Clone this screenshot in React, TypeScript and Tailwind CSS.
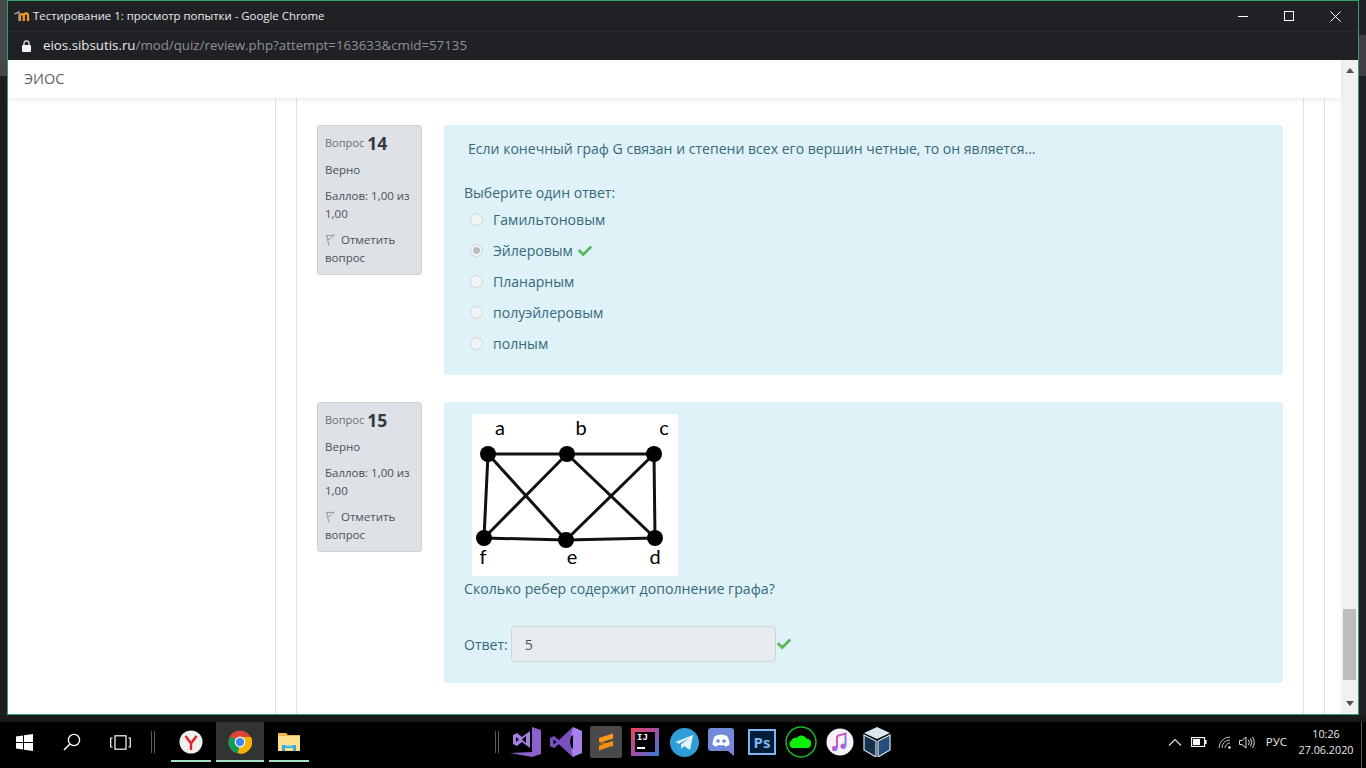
import React from "react";
import { FaCheck } from "react-icons/fa";

const Check = ({ s = 14 }: { s?: number }) => <FaCheck size={s} className="text-[#5cb85c] shrink-0" />;

const Radio = ({ on }: { on?: boolean }) => (
  <span className="w-[13px] h-[13px] rounded-full border border-[#cfd3d6] bg-[#f2f4f5] flex items-center justify-center shrink-0">
    {on && <span className="w-[7px] h-[7px] rounded-full bg-[#b9bdc0]" />}
  </span>
);

const Flag = () => (
  <svg width="10" height="12" viewBox="0 0 10 12" className="shrink-0" fill="none" stroke="#8a8d90" strokeWidth="0.9">
    <path d="M1.5 1 L4 11.5" />
    <path d="M1.5 1.2 C4 2 6 1.4 9.2 1 C7.6 2.8 6.4 3.6 6 4.2 C5 5 4 5.4 2.6 5.6" />
  </svg>
);

const Info = ({ n }: { n: string }) => (
  <div className="w-[105px] h-[150px] shrink-0 rounded-[3px] border border-[#cdd1d5] bg-[#dee2e6] pl-[7px] pr-1 pt-[6px] text-[11.5px] leading-[18px] text-[#495057]">
    <div className="h-[22px] flex items-center gap-[3px]">
      <span className="text-[11px] text-[#6a7076]">Вопрос</span>
      <b className="text-[17.5px] text-[#343a40] font-bold">{n}</b>
    </div>
    <div className="mt-[7px]">Верно</div>
    <div className="mt-2">Баллов: 1,00 из<br />1,00</div>
    <div className="mt-2 flex items-center gap-[6px]"><Flag /><span>Отметить</span></div>
    <div>вопрос</div>
  </div>
);

const Option = ({ t, on, check }: { t: string; on?: boolean; check?: boolean }) => (
  <div className="h-[31px] flex items-center pl-[6px] gap-[10px]">
    <Radio on={on} />
    <span className="flex items-center gap-[5px]">{t}{check && <Check />}</span>
  </div>
);

const Graph = () => {
  const n: Record<string, [number, number]> = { a: [16, 40], b: [95, 40], c: [182, 40], f: [12, 124], e: [94, 126], d: [183, 124] };
  const edges = ["ab", "bc", "cd", "de", "ef", "fa", "ae", "bf", "bd", "ce"];
  return (
    <svg width="206" height="162" viewBox="0 0 206 162" className="bg-white block">
      {edges.map((e) => (
        <line key={e} x1={n[e[0]][0]} y1={n[e[0]][1]} x2={n[e[1]][0]} y2={n[e[1]][1]} stroke="#111" strokeWidth="3" />
      ))}
      {Object.values(n).map(([x, y], i) => <circle key={i} cx={x} cy={y} r="8" fill="#000" />)}
      <g fontFamily="Lato, sans-serif" fontSize="20" fill="#000" textAnchor="middle">
        <text x="28" y="21">a</text>
        <text x="109" y="21">b</text>
        <text x="192" y="21">c</text>
        <text x="11" y="150">f</text>
        <text x="100" y="150">e</text>
        <text x="183" y="150">d</text>
      </g>
    </svg>
  );
};

const Win = () => (
  <svg width="17" height="17" viewBox="0 0 17 17" fill="#fff"><path d="M0 2.4 7 1.4V8H0ZM8 1.2 17 0V8H8ZM0 9H7V15.6L0 14.6ZM8 9H17V17L8 15.8Z" /></svg>
);
const Search = () => (
  <svg width="18" height="18" viewBox="0 0 18 18" fill="none" stroke="#fff" strokeWidth="1.3"><circle cx="11" cy="7" r="5.6" /><path d="M7 11 1 17" strokeWidth="1.6" /></svg>
);
const TaskView = () => (
  <svg width="21" height="15" viewBox="0 0 21 15" fill="none" stroke="#fff" strokeWidth="1.2"><rect x="5" y="0.8" width="11" height="13.4" /><path d="M2.6 3H.7V12H2.6M18.4 3H20.3V12H18.4" /></svg>
);
const Yandex = () => (
  <svg width="24" height="24" viewBox="0 0 24 24"><circle cx="12" cy="12" r="11.5" fill="#f1efee" /><path d="M6.5 6 12 13.5 17.5 6M12 13.5V20" stroke="#e3202a" strokeWidth="2.4" fill="none" /></svg>
);
const Chrome = () => (
  <svg width="24" height="24" viewBox="0 0 24 24">
    <circle cx="12" cy="12" r="11.5" fill="#db4437" />
    <path d="M12 12 1.9 6.5A11.5 11.5 0 0 0 10 23.3Z" fill="#0f9d58" />
    <path d="M12 7H23A11.5 11.5 0 0 1 10 23.3L12 12Z" fill="#f4b400" />
    <circle cx="12" cy="12" r="5.4" fill="#fff" /><circle cx="12" cy="12" r="4.2" fill="#4285f4" />
  </svg>
);
const Folder = () => (
  <svg width="22" height="20" viewBox="0 0 22 20"><path d="M0 1H8L10 3H22V4.5H0Z" fill="#e9b94a" /><rect y="4" width="22" height="15" fill="#fbe08e" /><path d="M4 19V13H18V19H15V16H7V19Z" fill="#3fa7d6" /><rect x="7" y="13" width="8" height="1.6" fill="#7fd0ee" /></svg>
);
const VS1 = () => (
  <svg width="33" height="32" viewBox="0 0 33 32"><path d="M22 1 31 4V28L22 31 0 27 22 26Z" fill="#8b62cc" /><path d="M3 9 7 7 12 11 20 5V22L12 16 7 20 3 18Z" fill="#a67fe0" /><path d="M6 11V16L9 13.5ZM16 10 12 13.5 16 17Z" fill="#000" /></svg>
);
const VS2 = () => (
  <svg width="33" height="32" viewBox="0 0 33 32"><path d="M23 1 32 5V27L23 31 9 18Z" fill="#a77fe8" /><path d="M23 9V23L14 16Z" fill="#000" /><path d="M23 1 9 14 4 10 0 12V20L4 22 9 18 23 31 20 16Z" fill="#7b4fc0" /><path d="M3.5 13.5V18.5L6.5 16Z" fill="#000" /></svg>
);
const Sublime = () => (
  <svg width="32" height="32" viewBox="0 0 32 32"><rect width="32" height="32" rx="2" fill="#4a4a4a" /><path d="M9 12 23 7.5V12.5L9 17Z" fill="#ff9a1a" /><path d="M9 15 23 19V21L9 17Z" fill="#b86a10" /><path d="M9 19.5 23 15V19.5L9 24.5Z" fill="#f39014" /></svg>
);
const Idea = () => (
  <div className="w-[28px] h-[28px] relative bg-[linear-gradient(135deg,#f0405e,#a34fa6_50%,#2b7fd6)] flex items-center justify-center">
    <div className="w-[20px] h-[20px] bg-black text-white text-[9px] leading-[11px] font-bold pl-[2px] pt-[1px] font-['Liberation_Mono',monospace]">
      IJ
      <div className="w-[8px] h-[1.5px] bg-white mt-[3px]" />
    </div>
  </div>
);
const Telegram = () => (
  <svg width="29" height="29" viewBox="0 0 29 29"><circle cx="14.5" cy="14.5" r="14.5" fill="#2f9ed8" /><path d="M5.5 14 23 7 20 22 14 18 11.5 21 11 16.5 19 10 9 15.8Z" fill="#e8f4fb" /></svg>
);
const Discord = () => (
  <svg width="26" height="28" viewBox="0 0 26 28"><path d="M3 0H23A3 3 0 0 1 26 3V28L20 23H3A3 3 0 0 1 0 20V3A3 3 0 0 1 3 0Z" fill="#7289da" /><path d="M7 8C11 6 15 6 19 8 21 11 21.5 14 21.5 16.5 20 18 18 18.5 17 18.5L16 17C14 17.6 12 17.6 10 17L9 18.5C8 18.5 6 18 4.5 16.5 4.5 14 5 11 7 8Z" fill="#fff" /><circle cx="10" cy="13" r="1.8" fill="#7289da" /><circle cx="16" cy="13" r="1.8" fill="#7289da" /></svg>
);
const Ps = () => (
  <div className="w-[28px] h-[26px] border-2 border-[#7fb6f2] bg-[#001d3a] text-[#7fb6f2] text-[15px] leading-[22px] font-bold text-center font-['Open_Sans',sans-serif]">Ps</div>
);
const Cloud = () => (
  <svg width="32" height="32" viewBox="0 0 32 32"><circle cx="16" cy="16" r="15" fill="#000" stroke="#18c02c" strokeWidth="1.4" /><path d="M8 22A4 4 0 0 1 6.5 14.5 4 4 0 0 1 11.5 12 6 6 0 0 1 21.5 12.5 4.5 4.5 0 0 1 26 18 4 4 0 0 1 23 22Z" fill="#0cf00c" /></svg>
);
const Music = () => (
  <svg width="28" height="28" viewBox="0 0 28 28"><defs><linearGradient id="mg" x1="0" y1="0" x2="1" y2="1"><stop offset="0" stopColor="#f0489a" /><stop offset="0.5" stopColor="#b05fe0" /><stop offset="1" stopColor="#4a9df0" /></linearGradient></defs><circle cx="14" cy="14" r="13.5" fill="#f5f2f6" /><path d="M11 8 19.5 5.5V18M11 8V20.5" stroke="url(#mg)" strokeWidth="2" fill="none" /><circle cx="8.7" cy="20.5" r="2.7" fill="url(#mg)" /><circle cx="17.2" cy="18.3" r="2.7" fill="url(#mg)" /></svg>
);
const VBox = () => (
  <svg width="28" height="30" viewBox="0 0 28 30"><path d="M14 0 27 6 14 12 1 6Z" fill="#dbe6ee" /><path d="M1 8 13 14V30L1 23Z" fill="#14324e" stroke="#dbe6ee" strokeWidth="1.2" /><path d="M27 8 15 14V30L27 23Z" fill="#234f7a" stroke="#dbe6ee" strokeWidth="1.2" /></svg>
);

const Tb = ({ w, active, lineW, children }: { w: number; active?: boolean; lineW?: number; children: React.ReactNode }) => (
  <div style={{ width: w }} className={`relative h-full flex items-center justify-center shrink-0 ${active ? "bg-[#333333]" : ""}`}>
    {children}
    <span style={{ width: lineW ?? w }} className="absolute bottom-0 h-[2px] bg-[#a3e3c3]" />
  </div>
);

const Rule = () => <span className="block w-px h-[22px] bg-[#5a5a5a]" />;

export default function App() {
  return (
    <div className="w-[1366px] h-[768px] overflow-hidden bg-[#1c1c1e] flex flex-col font-['Open_Sans',sans-serif]">
      <div className="h-[715px] flex shrink-0">
        <div className="w-[7px] shrink-0 flex flex-col">
          <div className="h-[76px] bg-[#48484c]" />
          <div className="flex-1 bg-[#1e1e20]" />
        </div>
        <div className="flex-1 min-w-0 border border-[#2fa36d] flex flex-col bg-white">
          <div className="h-[30px] bg-[#202124] flex items-center text-[#e8eaed] shrink-0">
            <svg width="16" height="11" viewBox="0 0 16 11" className="ml-[6px] mr-[2px] mt-[1px]" fill="none"><path d="M6 10V4.5A2 2 0 0 1 9.8 4.5V10M9.8 4.5A2 2 0 0 1 14 4.5V10" stroke="#f59a23" strokeWidth="2.2" /><path d="M0.5 3 5 1V10" stroke="#9a9a9a" strokeWidth="1.4" /></svg>
            <span className="text-[11.4px] ml-px">Тестирование 1: просмотр попытки - Google Chrome</span>
            <div className="ml-auto flex items-center h-full">
              <span className="w-[46px] flex justify-center"><span className="block w-[10px] h-px bg-white" /></span>
              <span className="w-[46px] flex justify-center"><span className="block w-[10px] h-[10px] border border-white" /></span>
              <span className="w-[46px] flex justify-center">
                <svg width="11" height="11" viewBox="0 0 11 11" stroke="#fff"><path d="M.5.5 10.5 10.5M10.5.5 .5 10.5" /></svg>
              </span>
            </div>
          </div>
          <div className="h-[29px] bg-[#202124] border-t border-[#2a2b2e] flex items-center pl-[14px] shrink-0">
            <svg width="9" height="12" viewBox="0 0 9 12"><path d="M2 5V3.3A2.5 2.5 0 0 1 7 3.3V5" stroke="#f1f3f4" fill="none" strokeWidth="1.2" /><rect y="5" width="9" height="7" rx="1" fill="#f1f3f4" /></svg>
            <span className="ml-[12px] text-[13.3px] text-[#8e9195]"><span className="text-[#e8eaed]">eios.sibsutis.ru</span>/mod/quiz/review.php?attempt=163633&amp;cmid=57135</span>
          </div>
          <div className="flex-1 flex min-h-0">
            <div className="flex-1 flex flex-col min-w-0">
              <div className="h-[38px] shrink-0 bg-white shadow-[0_2px_4px_rgba(0,0,0,0.08)] relative z-10 flex items-center pl-4 text-[14.4px] text-[#5c6165]">ЭИОС</div>
              <div className="flex-1 flex min-h-0">
                <div className="w-[267px] shrink-0" />
                <div className="w-[21px] shrink-0 border-l border-[#dee2e6]" />
                <div className="flex-1 min-w-0 border-l border-r border-[#dee2e6] flex flex-col gap-[27px] pt-[27px] pl-[20px] pr-[20px] text-[14.05px] text-[#38697a]">
                  <div className="flex gap-[22px]">
                    <Info n="14" />
                    <div className="flex-1 h-[250px] rounded-[3px] bg-[#def2f8] pl-[20px] pt-[13px]">
                      <div className="pl-1 leading-[22px]">Если конечный граф G связан и степени всех его вершин четные, то он является...</div>
                      <div className="mt-[22px] leading-[22px]">Выберите один ответ:</div>
                      <div>
                        <Option t="Гамильтоновым" />
                        <Option t="Эйлеровым" on check />
                        <Option t="Планарным" />
                        <Option t="полуэйлеровым" />
                        <Option t="полным" />
                      </div>
                    </div>
                  </div>
                  <div className="flex gap-[22px]">
                    <Info n="15" />
                    <div className="flex-1 h-[281px] rounded-[3px] bg-[#def2f8] pl-[20px] pt-[12px]">
                      <div className="ml-[8px]"><Graph /></div>
                      <div className="mt-[2px] leading-[22px] text-[14.15px]">Сколько ребер содержит дополнение графа?</div>
                      <div className="mt-[26px] flex items-center">
                        <span className="pt-px">Ответ:</span>
                        <div className="ml-[3px] w-[265px] h-[36px] rounded-[4px] border border-[#ced4da] bg-[#e9ecef] text-[#495057] pl-[13px] pt-px flex items-center">5</div>
                        <span className="ml-[1px]"><Check s={14} /></span>
                      </div>
                    </div>
                  </div>
                </div>
                <div className="w-[21px] shrink-0 border-r border-[#dee2e6]" />
                <div className="w-[16px] shrink-0" />
              </div>
            </div>
            <div className="w-[17px] shrink-0 bg-[#f1f1f1] flex flex-col items-center relative">
              <svg width="8" height="5" viewBox="0 0 8 5" className="mt-[8px]"><path d="M4 0 8 5H0Z" fill="#505050" /></svg>
              <div className="mt-auto mb-[8px]"><svg width="8" height="5" viewBox="0 0 8 5"><path d="M4 5 8 0H0Z" fill="#505050" /></svg></div>
              <div className="absolute left-[2px] right-[2px] top-[549px] h-[71px] bg-[#bdbdbd]" />
            </div>
          </div>
        </div>
        <div className="w-[7px] shrink-0 flex flex-col">
          <div className="h-[35px] bg-[#202124]" />
          <div className="h-[41px] bg-[#3f3f44]" />
          <div className="flex-1 bg-[#202124]" />
        </div>
      </div>
      <div className="h-[53px] shrink-0 bg-[linear-gradient(180deg,#1a1a1c_0,#1a1a1c_7px,#000_7px)] pt-[7px] pb-[6px] flex items-center text-white">
        <div className="h-full flex items-center w-[151px] shrink-0">
          <span className="w-[48px] flex justify-center"><Win /></span>
          <span className="w-[48px] flex justify-center"><Search /></span>
          <span className="w-[48px] flex justify-center"><TaskView /></span>
        </div>
        <div className="flex gap-[2px] mr-[12px]"><Rule /><Rule /></div>
        <div className="h-full flex items-center">
          <Tb w={48} lineW={40}><Yandex /></Tb>
          <span className="w-[1px]" />
          <Tb w={48} active><Chrome /></Tb>
          <Tb w={50} lineW={40}><Folder /></Tb>
        </div>
        <div className="flex gap-[2px] ml-[181px] mr-[11px]"><Rule /><Rule /></div>
        <div className="flex items-center">
          <VS1 />
          <span className="ml-[7px]"><VS2 /></span>
          <span className="ml-[7px]"><Sublime /></span>
          <span className="ml-[9px]"><Idea /></span>
          <span className="ml-[11px]"><Telegram /></span>
          <span className="ml-[9px]"><Discord /></span>
          <span className="ml-[14px]"><Ps /></span>
          <span className="ml-[9px]"><Cloud /></span>
          <span className="ml-[9px]"><Music /></span>
          <span className="ml-[9px]"><VBox /></span>
        </div>
        <div className="ml-auto flex items-center h-full pr-[4px] text-[#e8e8e8]">
          <svg width="14" height="8" viewBox="0 0 14 8" fill="none" stroke="#ddd" strokeWidth="1.2"><path d="M1 7.5 7 1.5 13 7.5" /></svg>
          <svg width="16" height="10" viewBox="0 0 16 10" className="ml-[9px]" fill="none"><rect x=".6" y=".6" width="13" height="8.8" stroke="#fff" strokeWidth="1.1" /><rect x="2" y="2" width="7" height="6" fill="#fff" /><rect x="14" y="3" width="1.6" height="4" fill="#fff" /></svg>
          <svg width="14" height="13" viewBox="0 0 14 13" className="ml-[11px]" fill="none" stroke="#bbb" strokeWidth="1"><path d="M1 12A11 11 0 0 1 12 1M4 12A8 8 0 0 1 12 4M7 12A5 5 0 0 1 12 7" /><circle cx="11.5" cy="11.5" r="1.2" fill="#fff" stroke="none" /></svg>
          <svg width="17" height="13" viewBox="0 0 17 13" className="ml-[7px]" fill="none" stroke="#ddd" strokeWidth="1"><path d="M.5 4.5H3L7 1V12L3 8.5H.5Z" /><path d="M9.5 4Q11 6.5 9.5 9M11.5 2.5Q14 6.5 11.5 10.5M13.5 1Q17 6.5 13.5 12" /></svg>
          <span className="ml-[10px] text-[11.5px]">РУС</span>
          <div className="ml-[11px] w-[56px] text-center text-[10.8px] leading-[16px]"><div>10:26</div><div>27.06.2020</div></div>
          <span className="ml-[7px] w-px h-[46px] bg-[#5a5a5a] self-end -mb-[6px]" />
        </div>
      </div>
    </div>
  );
}
